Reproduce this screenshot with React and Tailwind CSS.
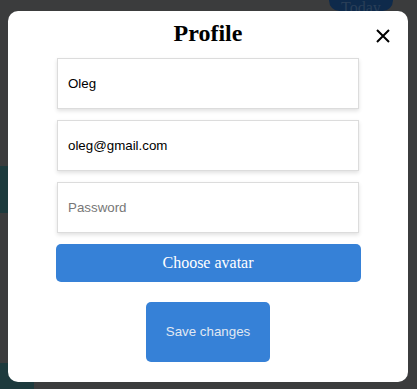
export default function App() {
  return (
    <div className="relative w-[417px] h-[389px] overflow-hidden bg-[#3b3c3d]">
      {/* page behind the overlay */}
      <div className="absolute left-[329px] -top-[10px] w-[64px] h-[21px] rounded-full bg-[#0e2a4b] text-center font-['Liberation_Serif',serif] text-[16px] leading-[36px] text-[#2a3f58]">
        Today
      </div>
      <div className="absolute left-0 top-[166px] w-[8px] h-[47px] bg-[#1d3a3d]" />
      <div className="absolute left-0 top-[363px] w-[34px] h-[26px] bg-[#1d3a3d]" />

      {/* modal */}
      <div className="absolute left-[8px] top-[11px] w-[400px] h-[371px] rounded-[10px] bg-white">
        <div className="relative flex justify-center pt-[7px] h-[47px]">
          <h2 className="font-['Liberation_Serif',serif] font-bold text-[24px] leading-[30px] text-black">Profile</h2>
          <button className="absolute right-[18px] top-[18px] w-[14px] h-[14px]">
            <svg viewBox="0 0 14 14" className="w-[14px] h-[14px]" fill="none" stroke="#000" strokeWidth="2">
              <path d="M1 1L13 13M13 1L1 13" />
            </svg>
          </button>
        </div>
        <div className="flex flex-col items-center">
          <div className="flex flex-col gap-[11px] w-[302px]">
            <input
              defaultValue="Oleg"
              className="h-[51px] px-[10px] border border-[#dcdcdc] shadow-[0_2px_4px_rgba(0,0,0,0.12)] font-['Liberation_Sans',sans-serif] text-[13.33px] text-black outline-none"
            />
            <input
              defaultValue="oleg@gmail.com"
              className="h-[51px] px-[10px] border border-[#dcdcdc] shadow-[0_2px_4px_rgba(0,0,0,0.12)] font-['Liberation_Sans',sans-serif] text-[13.33px] text-black outline-none"
            />
            <input
              type="password"
              placeholder="Password"
              className="h-[51px] px-[10px] border border-[#dcdcdc] shadow-[0_2px_4px_rgba(0,0,0,0.12)] font-['Liberation_Sans',sans-serif] text-[13.33px] text-black placeholder-[#777] outline-none"
            />
          </div>
          <button className="mt-[11px] w-[305px] h-[38px] rounded-[5px] bg-[#3681d7] font-['Liberation_Serif',serif] text-[16px] text-white">
            Choose avatar
          </button>
          <button className="mt-[20px] w-[124px] h-[60px] rounded-[5px] bg-[#3681d7] font-['Liberation_Sans',sans-serif] text-[13.33px] text-[#e1e8f2]">
            Save changes
          </button>
        </div>
      </div>
    </div>
  );
}
